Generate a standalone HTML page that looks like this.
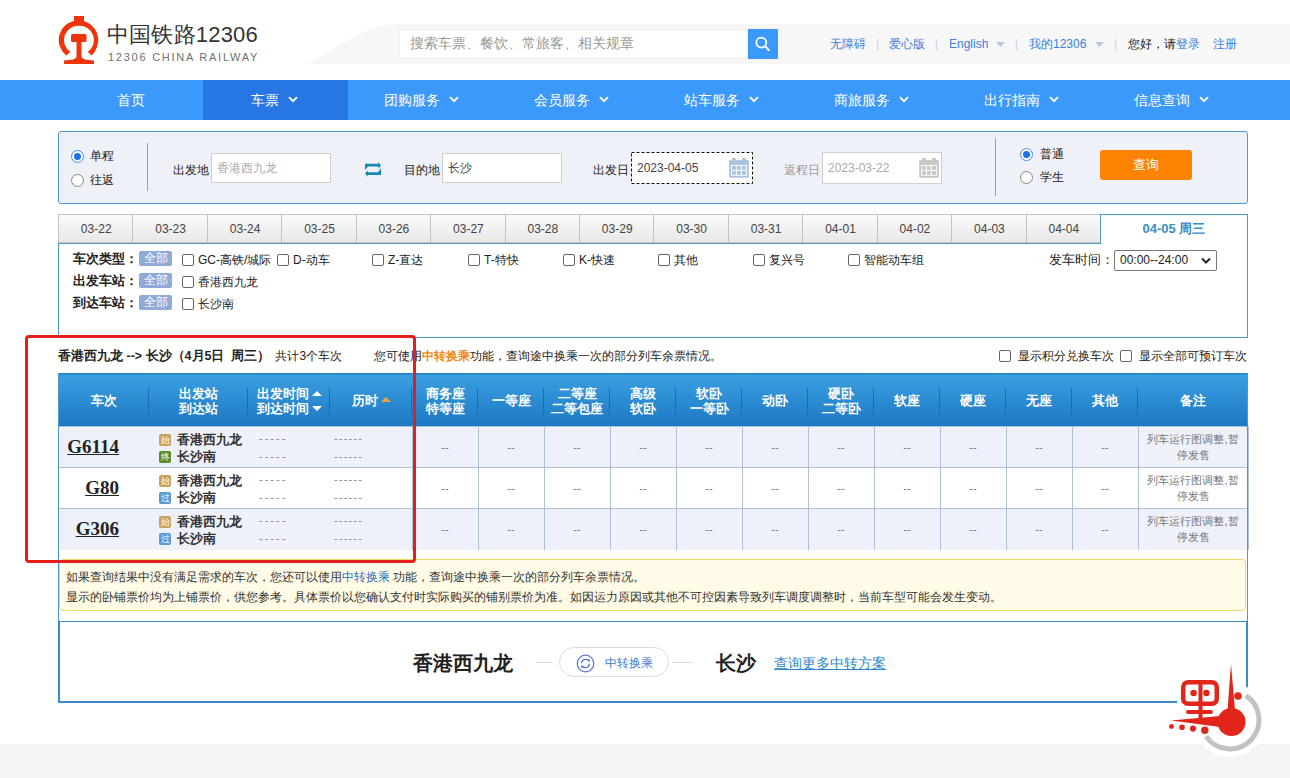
<!DOCTYPE html>
<html><head><meta charset="utf-8">
<style>
*{box-sizing:border-box;margin:0;padding:0}
html,body{width:1290px;height:778px;overflow:hidden;background:#fff;font-family:"Liberation Sans",sans-serif;color:#333;font-size:12px}
.abs{position:absolute}
/* header */
#band{position:absolute;left:300px;top:24px;width:990px;height:40px}
.title{position:absolute;left:107px;top:21px;font-size:22px;letter-spacing:0.2px;color:#333;white-space:nowrap;line-height:28px}
.sub{position:absolute;left:108px;top:50px;font-size:11px;color:#707070;letter-spacing:1.75px;white-space:nowrap;line-height:14px}
.search{position:absolute;left:399px;top:29px;width:349px;height:30px;background:#fff;border:1px solid #f0f0f0;font-size:14px;color:#999;line-height:27px;padding-left:10px}
.sbtn{position:absolute;left:748px;top:29px;width:30px;height:30px;background:#3b99fc}
.links{position:absolute;top:36px;font-size:12px;line-height:16px;white-space:nowrap}
.lk{color:#3b7fe0}
.sep{color:#c8d4e0}
/* nav */
#nav{position:absolute;left:0;top:80px;width:1290px;height:40px;background:#3b99fc}
.ni{position:absolute;top:0;height:40px;line-height:40px;color:#fff;font-size:14px;text-align:center;white-space:nowrap}
.ni.act{background:#2676e3}
.arr{display:inline-block;width:10px;height:7px;margin-left:9px;position:relative;top:-2px;vertical-align:middle}
.ni.a{padding-right:3px}
/* form */
#form{position:absolute;left:58px;top:131px;width:1190px;height:73px;background:#eef1f8;border:1px solid #4a9ad0;border-radius:3px}
.radio{position:absolute;width:13px;height:13px;border-radius:50%;border:1px solid #8a8a8a;background:#fff}
.radio.on{border-color:#3d8ef0;border-width:1.5px}
.radio.on::after{content:"";position:absolute;left:1.5px;top:1.5px;width:7px;height:7px;border-radius:50%;background:#1a73e8}
.lbl{position:absolute;font-size:12px;color:#222;line-height:16px;white-space:nowrap}
.inp{position:absolute;height:30px;background:#fff;border:1px solid #cfcfcf;font-size:12px;color:#aaa;line-height:28px;padding-left:5px;white-space:nowrap}
.vsep{position:absolute;width:1px;background:#6ab4d0}
.qbtn{position:absolute;left:1041px;top:18px;width:92px;height:30px;background:#fc8302;border-radius:3px;color:#fff;font-size:13px;text-align:center;line-height:30px}

/* tabs */
.tab{position:absolute;top:214px;height:29px;border:1px solid #c4c4c4;border-right:none;background:linear-gradient(#fafafa,#e8e8e8);font-size:12px;color:#444;text-align:center;line-height:28px}
.tab.act{background:#fff;border:1px solid #4a9ad0;border-bottom:none;color:#3c8cc8;font-weight:bold;font-size:13px;height:30px;z-index:2}
#filter{position:absolute;left:58px;top:243px;width:1190px;height:95px;border:1px solid #4a9ad0;background:#fff}
.fl{position:absolute;font-size:13px;font-weight:bold;color:#222;line-height:16px;white-space:nowrap}
.badge{position:absolute;width:33px;height:15px;background:#8fa9d8;color:#fff;font-size:12px;line-height:15px;text-align:center;border-radius:2px}
.cb{position:absolute;width:12px;height:12px;border:1px solid #666;border-radius:2px;background:#fff}
.ct{position:absolute;font-size:12px;color:#222;line-height:16px;white-space:nowrap}
/* table */
#tbl{position:absolute;left:58px;top:373px;width:1190px;border-collapse:collapse;table-layout:fixed}
#tbl th{height:53px;background:linear-gradient(#3b9fe0,#1c78c4);border-top:1px solid #2b82c4;padding-top:3px !important;color:#fff;font-size:12.5px;font-weight:bold;line-height:15px;padding:0;position:relative}
#tbl th::after{content:"";position:absolute;right:0;top:14px;height:27px;width:1px;background:#1d6bb0;box-shadow:1px 0 0 rgba(255,255,255,0.18)}
#tbl td.nb{border-left:none;border-right:none}
#tbl th:last-child::after{display:none}
#tbl td{height:41px;border:1px solid #adc0dc;text-align:center;color:#777;font-size:11px;padding:0}
#tbl tr.r1 td,#tbl tr.r3 td{background:#eef1f9}
#tbl tr.r2 td{background:#fff}
.tn{font-family:"Liberation Serif",serif;font-weight:bold;font-size:19px;color:#222;text-decoration:underline}
.st{position:absolute;font-size:13px;font-weight:bold;color:#333;line-height:16px;white-space:nowrap}
.ico{display:inline-block;width:12px;height:12px;border-radius:2px;color:#fff;font-size:9px;line-height:12px;text-align:center;margin-right:6px;vertical-align:1px;font-weight:normal}
.dash{position:absolute;color:#888;font-size:11px;line-height:12px;letter-spacing:2px}
#tbl tr.r3 td{border-bottom:none}
.note{color:#999;font-size:12px;line-height:16px}
</style></head><body>
<!-- header -->
<svg class="abs" style="left:0;top:0" width="1290" height="80">
  <path d="M307 64 C330 51 352 38 368 30 C380 25 390 24 405 24 L1290 24 L1290 64 Z" fill="#f7f7f7"/>
  <!-- logo -->
  <g fill="#f0340a">
    <path d="M79 20.5 A19.5 19.5 0 0 1 97 47 A19.5 19.5 0 0 1 91.5 55.5 L87.8 51.8 A14.3 14.3 0 0 0 79 25.7 A14.3 14.3 0 0 0 70.2 51.8 L66.5 55.5 A19.5 19.5 0 0 1 79 20.5 Z" />
    <rect x="74" y="16" width="10" height="5"/>
    <rect x="71" y="34" width="15.5" height="8" rx="1.5"/>
    <path d="M76.5 41 L81.5 41 L81.5 57 Q82 60 94 60.5 L94 64 L64 64 L64 60.5 Q76 60 76.5 57 Z"/>
  </g>
</svg>
<div class="title">中国铁路12306</div>
<div class="sub">12306 CHINA RAILWAY</div>
<div class="search">搜索车票、餐饮、常旅客、相关规章</div>
<div class="sbtn"><svg width="30" height="30"><circle cx="13.3" cy="13.6" r="5" fill="none" stroke="#fff" stroke-width="1.8"/><path d="M17 17.3 L20.8 21" stroke="#fff" stroke-width="2" stroke-linecap="round"/></svg></div>
<div class="links" style="left:830px"><span class="lk">无障碍</span></div>
<div class="links sep" style="left:876px">|</div>
<div class="links" style="left:889px"><span class="lk">爱心版</span></div>
<div class="links sep" style="left:935px">|</div>
<div class="links" style="left:949px"><span class="lk">English</span></div>
<svg class="abs" style="left:996px;top:42px" width="10" height="6"><path d="M0 0 L9 0 L4.5 5 Z" fill="#b8c8dc"/></svg>
<div class="links sep" style="left:1015px">|</div>
<div class="links" style="left:1029px"><span class="lk">我的12306</span></div>
<svg class="abs" style="left:1095px;top:42px" width="10" height="6"><path d="M0 0 L9 0 L4.5 5 Z" fill="#b8c8dc"/></svg>
<div class="links sep" style="left:1114px">|</div>
<div class="links" style="left:1128px;color:#222">您好，请<span class="lk">登录</span></div>
<div class="links" style="left:1213px"><span class="lk">注册</span></div>

<!-- nav -->
<div id="nav">
  <div class="ni" style="left:58px;width:145px">首页</div>
  <div class="ni act a" style="left:203px;width:145px">车票<svg class="arr" width="10" height="7"><path d="M1 1.2 L5 5.2 L9 1.2" fill="none" stroke="#fff" stroke-width="1.9"/></svg></div>
  <div class="ni a" style="left:348px;width:150px">团购服务<svg class="arr" width="10" height="7"><path d="M1 1.2 L5 5.2 L9 1.2" fill="none" stroke="#fff" stroke-width="1.9"/></svg></div>
  <div class="ni a" style="left:498px;width:150px">会员服务<svg class="arr" width="10" height="7"><path d="M1 1.2 L5 5.2 L9 1.2" fill="none" stroke="#fff" stroke-width="1.9"/></svg></div>
  <div class="ni a" style="left:648px;width:150px">站车服务<svg class="arr" width="10" height="7"><path d="M1 1.2 L5 5.2 L9 1.2" fill="none" stroke="#fff" stroke-width="1.9"/></svg></div>
  <div class="ni a" style="left:798px;width:150px">商旅服务<svg class="arr" width="10" height="7"><path d="M1 1.2 L5 5.2 L9 1.2" fill="none" stroke="#fff" stroke-width="1.9"/></svg></div>
  <div class="ni a" style="left:948px;width:150px">出行指南<svg class="arr" width="10" height="7"><path d="M1 1.2 L5 5.2 L9 1.2" fill="none" stroke="#fff" stroke-width="1.9"/></svg></div>
  <div class="ni a" style="left:1098px;width:150px">信息查询<svg class="arr" width="10" height="7"><path d="M1 1.2 L5 5.2 L9 1.2" fill="none" stroke="#fff" stroke-width="1.9"/></svg></div>
</div>

<!-- form -->
<div id="form">
  <div class="radio on" style="left:12px;top:18px"></div>
  <div class="lbl" style="left:31px;top:16px">单程</div>
  <div class="radio" style="left:12px;top:42px"></div>
  <div class="lbl" style="left:31px;top:40px">往返</div>
  <div class="vsep" style="left:88px;top:11px;height:48px"></div>
  <div class="lbl" style="left:114px;top:30px">出发地</div>
  <div class="inp" style="left:152px;top:21px;width:120px">香港西九龙</div>
  <svg class="abs" style="left:303px;top:28px" width="20" height="18" viewBox="361 159 20 18"><defs><linearGradient id="sg" x1="0" x2="1"><stop offset="0" stop-color="#0f8e9e"/><stop offset="1" stop-color="#1b84c6"/></linearGradient></defs><path d="M364 162.7 H377.4 V161 L380 164.4 L377.4 167.7 V165.4 H367 L364 169 Z M380 173.9 H366.6 V175.8 L364 172.5 L366.6 169.3 V171.2 H377 L380 167.3 Z" fill="url(#sg)"/></svg>
  <div class="lbl" style="left:345px;top:30px">目的地</div>
  <div class="inp" style="left:383px;top:21px;width:120px;color:#444">长沙</div>
  <div class="lbl" style="left:534px;top:30px">出发日</div>
  <div class="inp" style="left:572px;top:20px;width:122px;height:32px;border:none;color:#444;font-size:12px;line-height:32px;padding-left:6px">2023-04-05</div>
  <svg class="abs" style="left:572px;top:20px" width="122" height="32"><rect x="0.5" y="0.5" width="121" height="31" fill="none" stroke="#111" stroke-width="1" stroke-dasharray="3,2"/></svg>
  <svg class="abs" style="left:670px;top:26px" width="20" height="20"><g fill="#a9c2de"><rect x="3" y="0" width="3.8" height="2.5"/><rect x="13" y="0" width="3.8" height="2.5"/><rect x="0.2" y="2.1" width="19.6" height="17.6"/></g><rect x="2" y="6.9" width="16" height="11" fill="#f4f8fc"/><g fill="#a9c2de"><rect x="3.2" y="8" width="3.6" height="3.8"/><rect x="8.1" y="8" width="3.6" height="3.8"/><rect x="13.1" y="8" width="3.8" height="3.8"/><rect x="3.2" y="12.9" width="3.6" height="3.9"/><rect x="8.1" y="12.9" width="3.6" height="3.9"/><rect x="13.1" y="12.9" width="3.8" height="3.9"/></g></svg>
  <div class="lbl" style="left:725px;top:30px;color:#999">返程日</div>
  <div class="inp" style="left:763px;top:20px;width:120px;height:32px;color:#aaa;line-height:30px">2023-03-22</div>
  <svg class="abs" style="left:860px;top:26px" width="20" height="20"><g fill="#c6c6c6"><rect x="3" y="0" width="3.8" height="2.5"/><rect x="13" y="0" width="3.8" height="2.5"/><rect x="0.2" y="2.1" width="19.6" height="17.6"/></g><rect x="2" y="6.9" width="16" height="11" fill="#f7f7f7"/><g fill="#c6c6c6"><rect x="3.2" y="8" width="3.6" height="3.8"/><rect x="8.1" y="8" width="3.6" height="3.8"/><rect x="13.1" y="8" width="3.8" height="3.8"/><rect x="3.2" y="12.9" width="3.6" height="3.9"/><rect x="8.1" y="12.9" width="3.6" height="3.9"/><rect x="13.1" y="12.9" width="3.8" height="3.9"/></g></svg>
  <div class="vsep" style="left:936px;top:6px;height:58px"></div>
  <div class="radio on" style="left:961px;top:16px"></div>
  <div class="lbl" style="left:981px;top:14px">普通</div>
  <div class="radio" style="left:961px;top:39px"></div>
  <div class="lbl" style="left:981px;top:37px">学生</div>
  <div class="qbtn">查询</div>
</div>

<!-- tabs -->
<div class="tab" style="left:58.0px;width:75.43px">03-22</div>
<div class="tab" style="left:132.4px;width:75.43px">03-23</div>
<div class="tab" style="left:206.9px;width:75.43px">03-24</div>
<div class="tab" style="left:281.3px;width:75.43px">03-25</div>
<div class="tab" style="left:355.7px;width:75.43px">03-26</div>
<div class="tab" style="left:430.2px;width:75.43px">03-27</div>
<div class="tab" style="left:504.6px;width:75.43px">03-28</div>
<div class="tab" style="left:579.0px;width:75.43px">03-29</div>
<div class="tab" style="left:653.4px;width:75.43px">03-30</div>
<div class="tab" style="left:727.9px;width:75.43px">03-31</div>
<div class="tab" style="left:802.3px;width:75.43px">04-01</div>
<div class="tab" style="left:876.7px;width:75.43px">04-02</div>
<div class="tab" style="left:951.2px;width:75.43px">04-03</div>
<div class="tab" style="left:1025.6px;width:75.43px">04-04</div>
<div class="tab act" style="left:1100px;width:148px">04-05 周三</div>
<div id="filter">
  <div class="fl" style="left:14px;top:7px">车次类型：</div>
  <div class="fl" style="left:14px;top:29px">出发车站：</div>
  <div class="fl" style="left:14px;top:51px">到达车站：</div>
  <div class="badge" style="left:80px;top:7px">全部</div>
  <div class="badge" style="left:80px;top:29px">全部</div>
  <div class="badge" style="left:80px;top:51px">全部</div>
  <div class="cb" style="left:123px;top:10px"></div><div class="ct" style="left:139px;top:8px">GC-高铁/城际</div>
  <div class="cb" style="left:218px;top:10px"></div><div class="ct" style="left:234px;top:8px">D-动车</div>
  <div class="cb" style="left:313px;top:10px"></div><div class="ct" style="left:329px;top:8px">Z-直达</div>
  <div class="cb" style="left:409px;top:10px"></div><div class="ct" style="left:425px;top:8px">T-特快</div>
  <div class="cb" style="left:504px;top:10px"></div><div class="ct" style="left:520px;top:8px">K-快速</div>
  <div class="cb" style="left:599px;top:10px"></div><div class="ct" style="left:615px;top:8px">其他</div>
  <div class="cb" style="left:694px;top:10px"></div><div class="ct" style="left:710px;top:8px">复兴号</div>
  <div class="cb" style="left:789px;top:10px"></div><div class="ct" style="left:805px;top:8px">智能动车组</div>
  <div class="cb" style="left:123px;top:32px"></div><div class="ct" style="left:139px;top:30px">香港西九龙</div>
  <div class="cb" style="left:123px;top:54px"></div><div class="ct" style="left:139px;top:52px">长沙南</div>
  <div class="ct" style="left:990px;top:8px;font-size:13px">发车时间：</div>
  <div class="abs" style="left:1055px;top:6px;width:103px;height:21px;border:1px solid #777;border-radius:2px;background:#fff;font-size:12px;line-height:19px;padding-left:5px;color:#222">00:00--24:00<svg class="abs" style="right:5px;top:6px" width="10" height="8"><path d="M1 1.5 L5 5.5 L9 1.5" fill="none" stroke="#222" stroke-width="2"/></svg></div>
</div>

<!-- result title -->
<div class="abs" style="left:58px;top:348px;font-size:12px;color:#222;line-height:16px;white-space:nowrap"><b style="font-size:12.5px">香港西九龙 --&gt; 长沙（4月5日&nbsp; 周三）</b><span style="margin-left:5px">共计3个车次</span></div>
<div class="abs" style="left:374px;top:348px;font-size:12px;color:#222;line-height:16px;white-space:nowrap">您可使用<b style="color:#f08a1a">中转换乘</b>功能，查询途中换乘一次的部分列车余票情况。</div>
<div class="cb" style="left:999px;top:350px"></div><div class="ct" style="left:1018px;top:348px">显示积分兑换车次</div>
<div class="cb" style="left:1120px;top:350px"></div><div class="ct" style="left:1139px;top:348px">显示全部可预订车次</div>

<!-- table -->
<table id="tbl">
<colgroup><col style="width:91px"><col style="width:99px"><col style="width:82px"><col style="width:82px">
<col style="width:66px"><col style="width:66px"><col style="width:66px"><col style="width:66px"><col style="width:66px"><col style="width:66px"><col style="width:66px"><col style="width:66px"><col style="width:66px"><col style="width:66px"><col style="width:66px"><col style="width:110px"></colgroup>
<tr><th>车次</th><th>出发站<br>到达站</th><th><span style="position:relative;left:-6px">出发时间<br>到达时间</span><svg style="position:absolute;left:64px;top:17px" width="11" height="21"><path d="M0 5 L5 0 L10 5 Z M0 15 L10 15 L5 20 Z" fill="#fff"/></svg></th><th><span style="position:relative;left:-6px">历时</span><svg style="position:absolute;left:51px;top:23px" width="11" height="6"><path d="M0 5 L5 0 L10 5 Z" fill="#f5a040"/></svg></th>
<th>商务座<br>特等座</th><th>一等座</th><th>二等座<br>二等包座</th><th>高级<br>软卧</th><th>软卧<br>一等卧</th><th>动卧</th><th>硬卧<br>二等卧</th><th>软座</th><th>硬座</th><th>无座</th><th>其他</th><th>备注</th></tr>
<tr class="r1"><td class="nb" style="text-align:right;padding-right:30px;position:relative"><span class="tn">G6114</span></td><td class="nb"></td><td class="nb"></td><td class="nb" style="border-right:1px solid #adc0dc"></td><td>--</td><td>--</td><td>--</td><td>--</td><td>--</td><td>--</td><td>--</td><td>--</td><td>--</td><td>--</td><td>--</td><td class="note">列车运行图调整,暂<br>停发售</td></tr>
<tr class="r2"><td class="nb" style="text-align:right;padding-right:30px;position:relative"><span class="tn">G80</span></td><td class="nb"></td><td class="nb"></td><td class="nb" style="border-right:1px solid #adc0dc"></td><td>--</td><td>--</td><td>--</td><td>--</td><td>--</td><td>--</td><td>--</td><td>--</td><td>--</td><td>--</td><td>--</td><td class="note">列车运行图调整,暂<br>停发售</td></tr>
<tr class="r3"><td class="nb" style="text-align:right;padding-right:30px;position:relative"><span class="tn">G306</span></td><td class="nb"></td><td class="nb"></td><td class="nb" style="border-right:1px solid #adc0dc"></td><td>--</td><td>--</td><td>--</td><td>--</td><td>--</td><td>--</td><td>--</td><td>--</td><td>--</td><td>--</td><td>--</td><td class="note">列车运行图调整,暂<br>停发售</td></tr>
</table>
<div class="st" style="left:159px;top:432px"><span class="ico" style="background:#c9a15a">始</span>香港西九龙</div><div class="st" style="left:159px;top:449px"><span class="ico" style="background:#5a8a2a">终</span>长沙南</div><div class="dash" style="left:259px;top:432px">-----</div><div class="dash" style="left:259px;top:450px">-----</div><div class="dash" style="left:334px;top:432px;letter-spacing:1.2px">------</div><div class="dash" style="left:334px;top:450px;letter-spacing:1.2px">------</div>
<div class="st" style="left:159px;top:473px"><span class="ico" style="background:#c9a15a">始</span>香港西九龙</div><div class="st" style="left:159px;top:490px"><span class="ico" style="background:#5b9bd5">过</span>长沙南</div><div class="dash" style="left:259px;top:473px">-----</div><div class="dash" style="left:259px;top:491px">-----</div><div class="dash" style="left:334px;top:473px;letter-spacing:1.2px">------</div><div class="dash" style="left:334px;top:491px;letter-spacing:1.2px">------</div>
<div class="st" style="left:159px;top:514px"><span class="ico" style="background:#c9a15a">始</span>香港西九龙</div><div class="st" style="left:159px;top:531px"><span class="ico" style="background:#5b9bd5">过</span>长沙南</div><div class="dash" style="left:259px;top:514px">-----</div><div class="dash" style="left:259px;top:532px">-----</div><div class="dash" style="left:334px;top:514px;letter-spacing:1.2px">------</div><div class="dash" style="left:334px;top:532px;letter-spacing:1.2px">------</div>

<!-- notice -->
<div class="abs" style="left:59px;top:559px;width:1187px;height:52px;background:#fffbe6;border:1px solid #f0d860;border-radius:4px;font-size:12px;color:#333;line-height:20px;padding:7px 0 0 6px;white-space:nowrap">如果查询结果中没有满足需求的车次，您还可以使用<span style="color:#2a6fc0">中转换乘</span> 功能，查询途中换乘一次的部分列车余票情况。<br>显示的卧铺票价均为上铺票价，供您参考。具体票价以您确认支付时实际购买的铺别票价为准。如因运力原因或其他不可控因素导致列车调度调整时，当前车型可能会发生变动。</div>
<!-- outer left/right border lines -->
<div class="abs" style="left:58px;top:373px;width:1px;height:249px;background:#4a9ad0"></div>
<div class="abs" style="left:1247px;top:373px;width:1px;height:249px;background:#4a9ad0"></div>
<!-- transfer -->
<div class="abs" style="left:58px;top:621px;width:1190px;height:82px;border:2px solid #3a8cc8;border-top-width:1px;background:#fff"></div>
<div class="abs" style="left:413px;top:651px;font-family:'Liberation Serif',serif;font-size:20px;color:#222;line-height:24px;white-space:nowrap;font-weight:bold">香港西九龙</div>
<div class="abs" style="left:536px;top:662px;width:17px;height:1px;background:#ddd"></div>
<div class="abs" style="left:559px;top:647px;width:110px;height:30px;border:1px solid #ddd;border-radius:15px;background:#fff"></div>
<svg class="abs" style="left:575px;top:653px" width="21" height="21"><circle cx="10.5" cy="10.5" r="8.3" fill="none" stroke="#5b75d8" stroke-width="1.2"/><path d="M6.6 10.2 A4 4 0 0 1 13.6 7.8 M14.4 10.8 A4 4 0 0 1 7.4 13.2" fill="none" stroke="#5b75d8" stroke-width="1.4"/><path d="M12 6.3 L15.2 6.5 L14.2 9.3 Z M9 14.7 L5.8 14.5 L6.8 11.7 Z" fill="#5b75d8"/></svg>
<div class="abs" style="left:605px;top:655px;font-size:12px;color:#3b7bd0;line-height:16px;white-space:nowrap">中转换乘</div>
<div class="abs" style="left:672px;top:662px;width:21px;height:1px;background:#ddd"></div>
<div class="abs" style="left:716px;top:651px;font-family:'Liberation Serif',serif;font-size:20px;color:#222;line-height:24px;white-space:nowrap;font-weight:bold">长沙</div>
<div class="abs" style="left:774px;top:654px;font-size:14px;color:#2a87d0;line-height:18px;white-space:nowrap;text-decoration:underline">查询更多中转方案</div>
<!-- footer -->
<div class="abs" style="left:0;top:744px;width:1290px;height:34px;background:#f5f5f5"></div>
<!-- red annotation -->
<div class="abs" style="left:25px;top:335px;width:391px;height:228px;border:3px solid #e41f1b;border-radius:4px;z-index:5"></div>

<!-- robot -->
<svg class="abs" style="left:1160px;top:655px;z-index:6" width="120" height="110" viewBox="1160 655 120 110">
  <defs>
  <g id="rb">
    <circle cx="1231.5" cy="722" r="14"/>
    <path d="M1227.5 710 L1231 664 L1235 710 Z"/>
    <circle cx="1238" cy="696" r="3.8"/>
    <path d="M1171 720.5 L1220 716 L1220 727 Z"/>
    <circle cx="1171.5" cy="726.5" r="2.4"/>
    <circle cx="1182" cy="727.3" r="2.8"/>
    <circle cx="1193" cy="728.6" r="3.1"/>
    <circle cx="1204.8" cy="730.3" r="3.7"/>
    <rect x="1198.5" y="680" width="4" height="40"/>
    <circle cx="1193.6" cy="693" r="3.2"/>
    <circle cx="1206.4" cy="693" r="3.2"/>
    <rect x="1186" y="710" width="27" height="4" rx="2"/>
  </g>
  </defs>
  <circle cx="1230" cy="720" r="37" fill="#fff"/>
  <use href="#rb" fill="#fff" stroke="#fff" stroke-width="9"/>
  <rect x="1183.2" y="682.2" width="33.6" height="21.6" rx="5" fill="none" stroke="#fff" stroke-width="13"/>
  <path d="M1245.9 695.7 A29 29 0 1 1 1206.1 736.4" fill="none" stroke="#c2c2c2" stroke-width="5"/>
  <use href="#rb" fill="#e1251b"/>
  <rect x="1183.2" y="682.2" width="33.6" height="21.6" rx="5" fill="none" stroke="#e1251b" stroke-width="4.5"/>
</svg>
</body></html>
